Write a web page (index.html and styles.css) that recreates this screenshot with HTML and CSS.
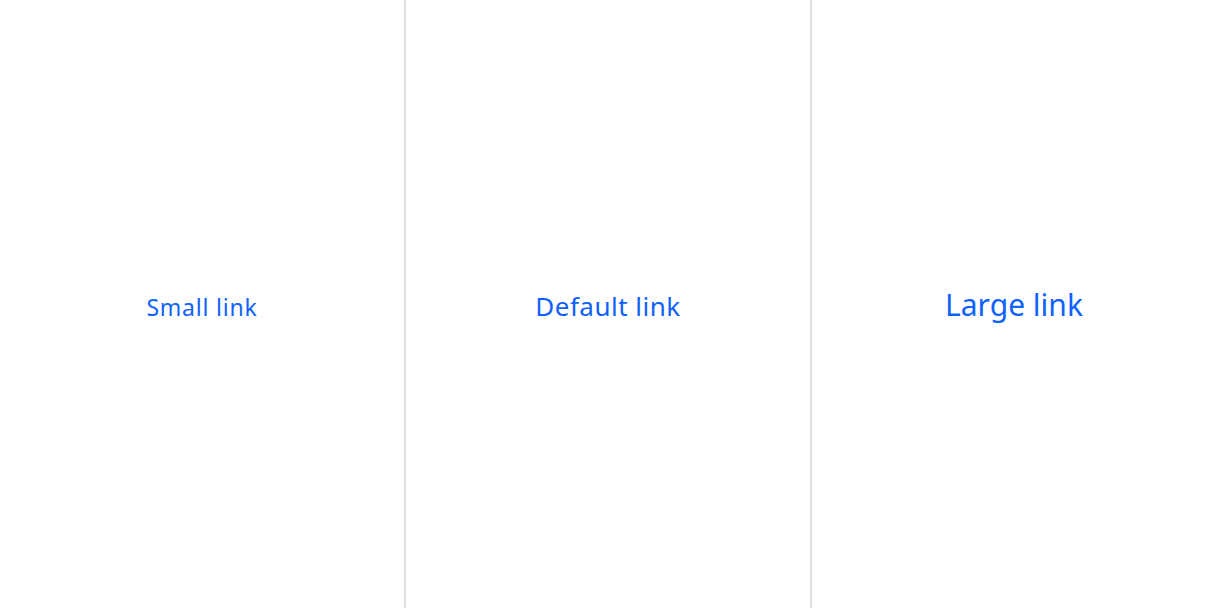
FILE: index.html
```html
<!DOCTYPE html>
<html>
<head>
<meta charset="utf-8">
<link rel="stylesheet" href="styles.css">
</head>
<body>
<div class="row">
  <div class="cell"><a class="link link-sm" href="#">Small link</a></div>
  <div class="cell"><a class="link link-md" href="#">Default link</a></div>
  <div class="cell"><a class="link link-lg" href="#">Large link</a></div>
</div>
</body>
</html>
```
FILE: styles.css
```css
html, body {
  margin: 0;
  padding: 0;
  background: #ffffff;
}
body {
  font-family: "Noto Sans", "Open Sans", sans-serif;
}
.row {
  display: grid;
  grid-template-columns: 1fr 1fr 1fr;
  column-gap: 2px;
  background: #e0e0e0;
  height: 608px;
}
.cell {
  background: #ffffff;
  display: flex;
  align-items: center;
  justify-content: center;
  padding-top: 6px;
  box-sizing: border-box;
}
.link {
  color: #0f62fe;
  text-decoration: none;
}
.link-sm { font-size: 23px; line-height: 28px; letter-spacing: 0.8px; }
.link-md { font-size: 26px; line-height: 32px; letter-spacing: 0.5px; margin-top: -3px; }
.link-lg { font-size: 30px; line-height: 36px; margin-top: -4px; }
```
